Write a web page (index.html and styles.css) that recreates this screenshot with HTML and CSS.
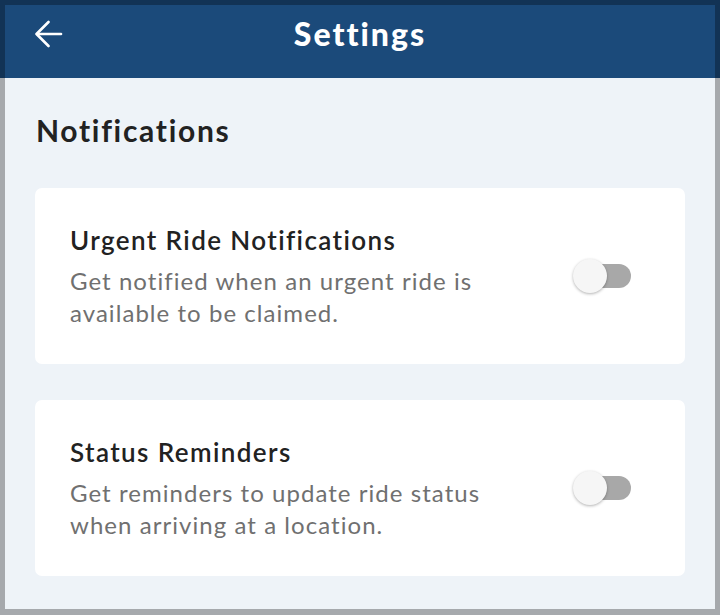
FILE: index.html
```html
<!DOCTYPE html>
<html lang="en">
<head>
<meta charset="utf-8">
<title>Settings</title>
<link rel="stylesheet" href="styles.css">
</head>
<body>
<div class="app">
  <header class="topbar">
    <div class="topbar-row">
      <button class="back" aria-label="Back">
        <svg width="28" height="28" viewBox="0 0 28 28" fill="none" stroke="#fff" stroke-width="2.6" stroke-linecap="round" stroke-linejoin="round">
          <path d="M26 14H2.5"/>
          <path d="M13.5 2L1.5 14l12 12"/>
        </svg>
      </button>
      <h1 class="title">Settings</h1>
    </div>
  </header>
  <main class="content">
    <h2 class="section-title">Notifications</h2>
    <div class="card">
      <div class="card-text">
        <div class="card-title">Urgent Ride Notifications</div>
        <div class="card-desc">Get notified when an urgent ride is available to be claimed.</div>
      </div>
      <div class="switch"><span class="track"></span><span class="thumb"></span></div>
    </div>
    <div class="card">
      <div class="card-text">
        <div class="card-title">Status Reminders</div>
        <div class="card-desc">Get reminders to update ride status when arriving at a location.</div>
      </div>
      <div class="switch"><span class="track"></span><span class="thumb"></span></div>
    </div>
  </main>
  <div class="frame"></div>
</div>
</body>
</html>
```
FILE: styles.css
```css
* { box-sizing: border-box; }
html, body { margin: 0; padding: 0; }
body {
  font-family: "Lato", "Liberation Sans", sans-serif;
  background: #eef3f8;
}
.app {
  position: relative;
  width: 720px;
  height: 615px;
  overflow: hidden;
  background: #eef3f8;
}
.topbar {
  height: 78px;
  background: #1b4a7a;
  padding-top: 5px;
}
.topbar-row {
  position: relative;
  height: 56px;
  display: flex;
  align-items: center;
  justify-content: center;
}
.back {
  position: absolute;
  left: 35px;
  top: 15px;
  padding: 0;
  border: 0;
  background: none;
  display: flex;
}
.title {
  margin: 0;
  color: #fff;
  font-size: 32px;
  font-weight: 900;
  letter-spacing: 2px;
}
.content {
  padding: 34px 35px 0;
  display: flex;
  flex-direction: column;
}
.section-title {
  margin: 0 0 40px 1px;
  font-size: 30px;
  font-weight: 700;
  color: #222;
  line-height: 36px;
  letter-spacing: 1.7px;
}
.card {
  background: #fff;
  border-radius: 7px;
  height: 176px;
  padding: 0 54px 0 35px;
  display: flex;
  align-items: center;
  justify-content: space-between;
  margin-bottom: 36px;
}
.card-text {
  width: 450px;
}
.card-title {
  font-size: 26px;
  font-weight: 600;
  color: #222;
  line-height: 34px;
  margin-bottom: 8px;
  letter-spacing: 1.4px;
}
.card-desc {
  font-size: 24px;
  color: #707070;
  line-height: 32px;
  letter-spacing: 1.05px;
}
.switch {
  position: relative;
  width: 58px;
  height: 34px;
}
.track {
  position: absolute;
  left: 2px;
  right: 0;
  top: 5px;
  height: 24px;
  border-radius: 12px;
  background: #a8a8a8;
}
.thumb {
  position: absolute;
  left: 0;
  top: 0;
  width: 34px;
  height: 34px;
  border-radius: 50%;
  background: #f6f6f6;
  box-shadow: 0 1px 3px rgba(0,0,0,0.3);
}
.frame {
  position: absolute;
  inset: 0;
  border-style: solid;
  border-color: rgba(0,0,0,0.3);
  border-width: 5px 5px 6px 5px;
  pointer-events: none;
}
```
